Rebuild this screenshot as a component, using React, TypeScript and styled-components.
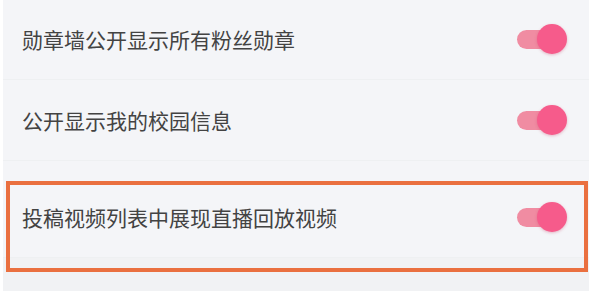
import React from 'react';
import styled, { createGlobalStyle } from 'styled-components';

const GlobalStyle = createGlobalStyle`
  html, body {
    margin: 0;
    padding: 0;
    background: #ffffff;
  }
  body {
    width: 600px;
    height: 291px;
    overflow: hidden;
    font-family: "Noto Sans CJK SC", "Noto Sans", sans-serif;
  }
`;

const Panel = styled.div`
  margin-left: 3px;
  width: 586px;
  height: 291px;
  background: #f4f5f8;
  display: flex;
  flex-direction: column;
`;

const Row = styled.div<{ $gap?: number }>`
  position: relative;
  height: 80px;
  margin-top: ${(p) => p.$gap ?? 0}px;
  display: flex;
  align-items: center;
  justify-content: space-between;
  padding: 0 22px 0 19px;
  border-bottom: 1px solid #eef0f2;
`;

const Label = styled.span`
  font-size: 21px;
  color: #434343;
`;

const Toggle = styled.div`
  position: relative;
  width: 50px;
  height: 30px;
  display: flex;
  align-items: center;
`;

const Track = styled.div`
  width: 40px;
  height: 19px;
  border-radius: 10px;
  background: #f08ca2;
`;

const Knob = styled.div`
  position: absolute;
  right: 0;
  top: 0;
  width: 30px;
  height: 30px;
  border-radius: 50%;
  background: #f65b8b;
  box-shadow: 0 1px 3px rgba(200, 60, 100, 0.35);
`;

const Highlight = styled.div`
  position: absolute;
  left: 3px;
  right: 1px;
  top: 4px;
  bottom: -15px;
  border: 4px solid #ea7040;
  pointer-events: none;
`;

const Bottom = styled.div`
  flex: 1;
  background: #f1f2f4;
`;

const Switch: React.FC = () => (
  <Toggle>
    <Track />
    <Knob />
  </Toggle>
);

const items = [
  { text: '勋章墙公开显示所有粉丝勋章', gap: -1 },
  { text: '公开显示我的校园信息', gap: 0 },
];

export default function App() {
  return (
    <>
      <GlobalStyle />
      <Panel>
        {items.map((it) => (
          <Row key={it.text} $gap={it.gap}>
            <Label>{it.text}</Label>
            <Switch />
          </Row>
        ))}
        <Row $gap={16}>
          <Label>投稿视频列表中展现直播回放视频</Label>
          <Switch />
          <Highlight />
        </Row>
        <Bottom />
      </Panel>
    </>
  );
}
